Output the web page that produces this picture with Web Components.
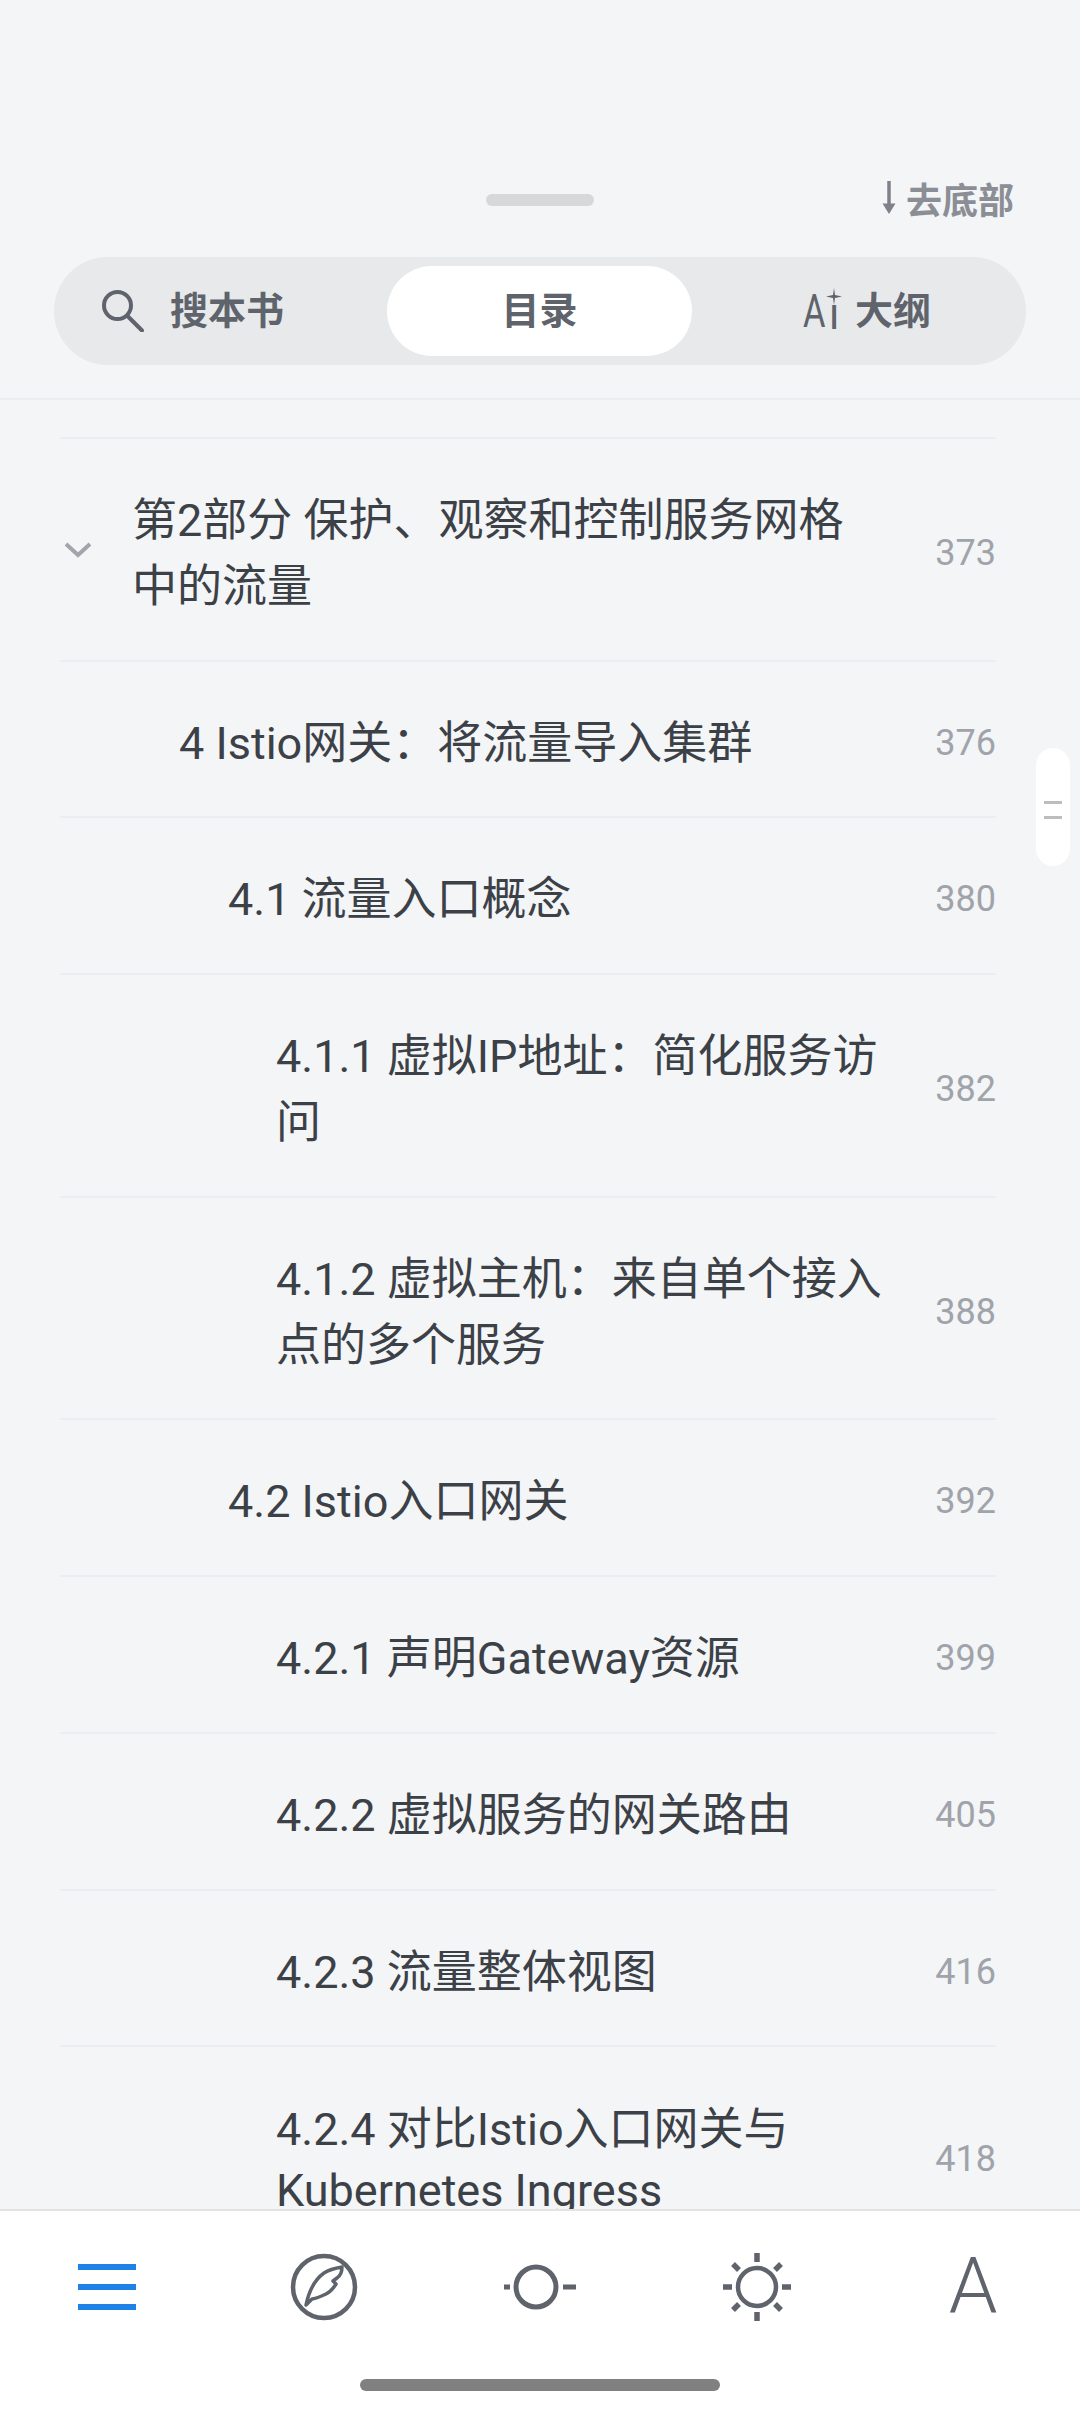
<!DOCTYPE html>
<html lang="zh">
<head>
<meta charset="utf-8">
<title>目录</title>
<style>
  html, body { margin: 0; height: 2412px; overflow: hidden; background: #f3f5f7; }
  body { font-family: Roboto, "Noto Sans CJK SC", sans-serif; }
  toc-sheet { height: 2412px; }
</style>
</head>
<body>
<toc-sheet>
  <toc-header slot="header"></toc-header>
  <toc-row level="0" page="373" expanded>第2部分 保护、观察和控制服务网格中的流量</toc-row>
  <toc-row level="1" page="376">4 Istio网关：将流量导入集群</toc-row>
  <toc-row level="2" page="380">4.1 流量入口概念</toc-row>
  <toc-row level="3" page="382">4.1.1 虚拟IP地址：简化服务访问</toc-row>
  <toc-row level="3" page="388">4.1.2 虚拟主机：来自单个接入点的多个服务</toc-row>
  <toc-row level="2" page="392">4.2 Istio入口网关</toc-row>
  <toc-row level="3" page="399">4.2.1 声明Gateway资源</toc-row>
  <toc-row level="3" page="405">4.2.2 虚拟服务的网关路由</toc-row>
  <toc-row level="3" page="416">4.2.3 流量整体视图</toc-row>
  <toc-row level="3" page="418" compact>4.2.4 对比Istio入口网关与Kubernetes Ingress</toc-row>
  <toc-toolbar slot="footer"></toc-toolbar>
</toc-sheet>
<script>
class TocSheet extends HTMLElement {
	constructor() {
		super();
		this.attachShadow({ mode: "open" });
		this.shadowRoot.innerHTML = `
    <style>
    :host {
      display: flex;
      flex-direction: column;
      position: relative;
      color: #3c4047;
    }
    #list {
      flex: 1;
      min-height: 0;
      overflow: hidden;
      padding: 37px 84px 0 60px;
    }
    #rule {
      height: 2px;
      background: #ebedf0;
    }
    #thumb {
      position: absolute;
      left: 1036px;
      top: 748px;
      width: 34px;
      height: 118px;
      border-radius: 17px;
      background: #fff;
    }
    #thumb::before, #thumb::after {
      content: "";
      position: absolute;
      left: 8px;
      width: 18px;
      height: 3px;
      background: #bdbdbd;
    }
    #thumb::before { top: 53px; }
    #thumb::after { top: 68px; }
    </style>
    <slot name="header"></slot>
    <div id="list">
      <div id="rule"></div>
      <slot></slot>
    </div>
    <slot name="footer"></slot>
    <div id="thumb"></div>
    `;
	}
}

class TocHeader extends HTMLElement {
	constructor() {
		super();
		this.attachShadow({ mode: "open" });
		this.shadowRoot.innerHTML = `
    <style>
    :host {
      display: block;
      height: 400px;
      box-sizing: border-box;
      border-bottom: 2px solid #ebedf0;
      padding-top: 172px;
    }
    #top {
      display: grid;
      grid-template-columns: 486px 108px 1fr;
      align-items: center;
      height: 46px;
      padding: 0 66px 0 0;
    }
    #handle {
      height: 12px;
      border-radius: 6px;
      background: #d6d8da;
    }
    #bottom {
      display: flex;
      justify-content: flex-end;
      align-items: center;
      gap: 8px;
      margin-bottom: 3px;
      font-size: 36px;
      font-weight: 700;
      color: #8b8e95;
    }
    #tabs {
      display: grid;
      grid-template-columns: 318px 318px 318px;
      height: 90px;
      margin: 39px 54px 0;
      padding: 9px;
      border-radius: 54px;
      background: #e7e9eb;
      color: #5f636b;
      font-size: 38px;
      line-height: 84px;
      font-weight: 700;
    }
    .tab {
      display: flex;
      align-items: center;
      justify-content: center;
    }
    #search { justify-content: flex-start; padding-left: 39px; gap: 26px; }
    #toc {
      margin: 0 7px 0 6px;
      background: #fff;
      border-radius: 45px;
    }
    #ai { justify-content: flex-start; padding-left: 104px; gap: 10px; }
    #mark {
      position: relative;
      width: 42px;
      height: 40px;
      font-size: 42px;
      font-weight: 400;
      line-height: 46px;
    }
    #mark b {
      display: inline-block;
      font-weight: 400;
      transform: scale(.82, 1.1);
      transform-origin: left bottom;
    }
    #mark i {
      position: absolute;
      left: 26px;
      top: 0;
      font-style: normal;
      transform: scaleY(1.05);
    }
    #mark svg { position: absolute; left: 23px; top: -3px; background: #e7e9eb; }
    </style>
    <div id="top">
      <span></span>
      <div id="handle"></div>
      <div id="bottom">
        <svg width="18" height="36" viewBox="0 0 18 36"><path d="M9 1V31" stroke="#7e8189" stroke-width="3.5"/><path d="M2.5 23.5L9 34L15.5 23.5Z" fill="#7e8189"/></svg>
        <span>去底部</span>
      </div>
    </div>
    <div id="tabs">
      <div class="tab" id="search">
        <svg width="42" height="42" viewBox="0 0 42 42" fill="none" stroke="#5f636b" stroke-width="4"><circle cx="15.500" cy="15.500" r="13.500"/><path d="M25.500 26L40 40.500" stroke-linecap="round"/></svg>
        <span>搜本书</span>
      </div>
      <div class="tab" id="toc"><span>目录</span></div>
      <div class="tab" id="ai">
        <span id="mark"><b>A</b><i>i</i><svg width="16" height="17" viewBox="0 0 16 17"><path d="M8 0L9 7L16 8.500L9 10L8 17L7 10L0 8.500L7 7Z" fill="#5f636b"/></svg></span>
        <span>大纲</span>
      </div>
    </div>
    `;
	}
}

class TocRow extends HTMLElement {
	static indents = [72, 119, 168, 216];
	constructor() {
		super();
		this.attachShadow({ mode: "open" });
		const level = Number(this.getAttribute("level") || 0);
		const compact = this.hasAttribute("compact");
		const chevron = this.hasAttribute("expanded")
			? `<svg id="chevron" width="28" height="16" viewBox="0 0 28 16" fill="none" stroke="#a2a5ab" stroke-width="4"><path d="M2 2L14 13L26 2"/></svg>`
			: "";
		this.shadowRoot.innerHTML = `
    <style>
    :host {
      display: flex;
      align-items: center;
      position: relative;
      box-sizing: border-box;
      padding: ${compact ? 52 : 49}px 0 39.7px ${TocRow.indents[level]}px;
      border-bottom: 2px solid #ebedf0;
      font-size: 45px;
      line-height: ${compact ? 61 : 66}px;
      color: #3c4047;
    }
    #text {
      width: ${826 - TocRow.indents[level]}px;
    }
    #page {
      margin: 0 0 2px auto;
      font-size: 36px;
      color: #a0a3aa;
      line-height: 40px;
    }
    #chevron {
      position: absolute;
      left: 4px;
      top: 103px;
    }
    </style>
    ${chevron}
    <div id="text"><slot></slot></div>
    <div id="page">${this.getAttribute("page")}</div>
    `;
	}
}

class TocToolbar extends HTMLElement {
	constructor() {
		super();
		this.attachShadow({ mode: "open" });
		this.shadowRoot.innerHTML = `
    <style>
    :host {
      display: block;
      flex: none;
      height: 203px;
      box-sizing: border-box;
      border-top: 2px solid #e2e3e5;
      background: #fff;
    }
    #icons {
      display: flex;
      justify-content: space-between;
      align-items: center;
      height: 152px;
      padding: 0 57px;
    }
    .slot {
      display: flex;
      justify-content: center;
      align-items: center;
      width: 100px;
    }
    #a {
      font-size: 78px;
      font-weight: 300;
      line-height: 1;
      color: #5f636b;
    }
    #home {
      width: 360px;
      height: 12px;
      margin: 16px auto 0;
      border-radius: 6px;
      background: #808080;
    }
    </style>
    <div id="icons">
      <div class="slot"><svg width="58" height="46" viewBox="0 0 58 46" fill="#1e82e6"><rect width="58" height="6"/><rect y="20" width="58" height="6"/><rect y="40" width="58" height="6"/></svg></div>
      <div class="slot"><svg width="68" height="68" viewBox="0 0 68 68" fill="none" stroke="#5f636b"><circle cx="34" cy="34" r="31" stroke-width="4.500"/><path d="M16 52C19 38 24 27 34 20C40 16 46 15 52 14C52 19 50 23 47 25L43 28L46 31C43 36 40 39 36 41C32 43 28 45 22 46L16 52Z" stroke-width="3.500" stroke-linejoin="round"/></svg></div>
      <div class="slot"><svg width="72" height="48" viewBox="0 0 72 48" fill="none" stroke="#5f636b" stroke-width="5"><circle cx="32" cy="24" r="20"/><path d="M0 24H6M59 24H72"/></svg></div>
      <div class="slot"><svg width="70" height="70" viewBox="0 0 70 70" fill="none" stroke="#5f636b"><circle cx="35" cy="35" r="19" stroke-width="4.500"/><path d="M35 1V10M35 60V69M1 35H10M60 35H69M11 12L17 18M59 12L53 18M11 58L17 52M59 58L53 52" stroke-width="5.500"/></svg></div>
      <div class="slot"><div id="a">A</div></div>
    </div>
    <div id="home"></div>
    `;
	}
}

customElements.define("toc-sheet", TocSheet);
customElements.define("toc-header", TocHeader);
customElements.define("toc-row", TocRow);
customElements.define("toc-toolbar", TocToolbar);
</script>
</body>
</html>
